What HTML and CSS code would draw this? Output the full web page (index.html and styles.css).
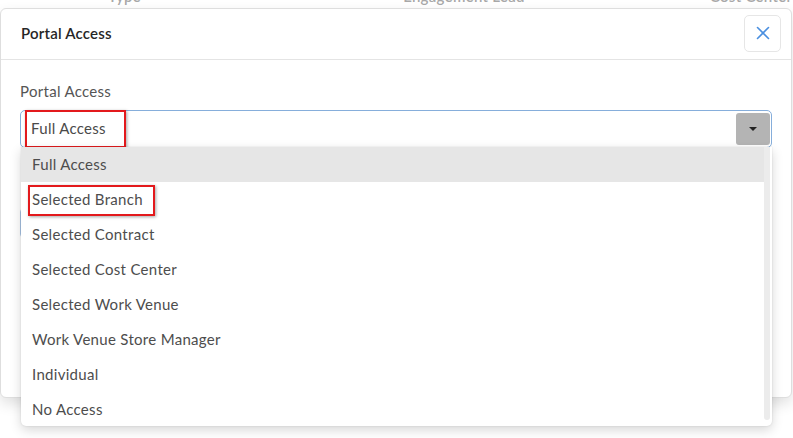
FILE: index.html
```html
<!DOCTYPE html>
<html>
<head>
<meta charset="utf-8">
<link rel="stylesheet" href="styles.css">
</head>
<body>
<div class="page">
  <div class="table-head">
    <span class="th th-type">Type</span>
    <span class="th th-lead">Engagement Lead</span>
    <span class="th th-cost">Cost Center</span>
  </div>
</div>

<div class="modal">
  <div class="modal-header">
    <span class="modal-title">Portal Access</span>
    <button class="close-btn" aria-label="Close">
      <svg width="14" height="14" viewBox="0 0 14 14"><path d="M1.5 1.5 L12.5 12.5 M12.5 1.5 L1.5 12.5" stroke="#4a8fe0" stroke-width="1.6" stroke-linecap="round" fill="none"/></svg>
    </button>
  </div>
  <div class="modal-body">
    <div class="field-label">Portal Access</div>
    <div class="select">
      <span class="select-value">Full Access</span>
      <span class="select-arrow"><span class="tri"></span></span>
      <span class="mark mark-value"></span>
    </div>
    <div class="behind-btn"></div>

    <div class="dropdown">
      <ul class="options">
        <li class="opt active">Full Access</li>
        <li class="opt">Selected Branch<span class="mark mark-opt"></span></li>
        <li class="opt">Selected Contract</li>
        <li class="opt">Selected Cost Center</li>
        <li class="opt">Selected Work Venue</li>
        <li class="opt">Work Venue Store Manager</li>
        <li class="opt">Individual</li>
        <li class="opt">No Access</li>
      </ul>
      <div class="scrollbar"></div>
    </div>
  </div>
</div>
</body>
</html>
```

FILE: styles.css
```css
* { box-sizing: border-box; }
html, body {
  margin: 0;
  padding: 0;
  background: #ffffff;
  font-family: Lato, "Open Sans", sans-serif;
  overflow: hidden;
}
body { width: 793px; height: 438px; position: relative; }

.page { height: 438px; }
.table-head {
  display: flex;
  margin-top: -13px;
  height: 20px;
  font-size: 15px;
  color: #a8a8a8;
  font-weight: 600;
  letter-spacing: 0.3px;
}
.th-type { margin-left: 108px; }
.th-lead { margin-left: 262px; }
.th-cost { margin-left: 185px; }

.modal {
  position: absolute;
  left: 0;
  top: 8px;
  width: 792px;
  height: 390px;
  background: #fff;
  border: 1px solid #dedede;
  border-radius: 6px;
  box-shadow: 0 6px 14px rgba(0,0,0,0.12);
}
.modal-header {
  height: 51px;
  display: flex;
  align-items: center;
  justify-content: space-between;
  padding: 0 10px 0 20px;
  border-bottom: 1px solid #e4e4e4;
}
.modal-title {
  font-size: 15px;
  font-weight: 600;
  color: #262626;
  margin-top: -3px;
  letter-spacing: 0.2px;
}
.close-btn {
  width: 37px;
  height: 37px;
  border: 1px solid #e6e6e6;
  border-radius: 5px;
  background: #fff;
  display: flex;
  align-items: center;
  justify-content: center;
  padding: 0;
  margin-top: -2px;
}

.modal-body {
  position: relative;
  padding: 21px 20px 0 19px;
}
.field-label {
  font-size: 15px;
  color: #555;
  line-height: 20px;
  letter-spacing: 0.3px;
}
.select {
  position: relative;
  margin-top: 9px;
  height: 38px;
  width: 752px;
  border: 1px solid #86aedb;
  border-radius: 5px;
  display: flex;
  align-items: center;
  justify-content: space-between;
  padding: 0 1px 0 10px;
}
.select-value {
  font-size: 15px;
  color: #4a4a4a;
  letter-spacing: 0.3px;
  margin-top: -3px;
}
.select-arrow {
  width: 34px;
  height: 32px;
  background: #b4b4b4;
  border-radius: 3px;
  display: flex;
  align-items: center;
  justify-content: center;
}
.tri {
  width: 0;
  height: 0;
  border-left: 4px solid transparent;
  border-right: 4px solid transparent;
  border-top: 4px solid #222;
}

.mark {
  position: absolute;
  border: 2px solid #e3191c;
  box-shadow: 1px 1px 3px rgba(0,0,0,0.35);
  pointer-events: none;
}
.mark-value {
  left: 4px;
  top: -1px;
  width: 101px;
  height: 38px;
}

.behind-btn {
  margin-top: 60px;
  width: 120px;
  height: 30px;
  border: 1px solid #a9c5e6;
  border-radius: 4px;
  background: #fff;
}

.dropdown {
  position: absolute;
  left: 20px;
  top: 87px;
  width: 751px;
  height: 279px;
  background: #fff;
  border-radius: 0 0 5px 5px;
  box-shadow: 0 4px 12px rgba(0,0,0,0.16), 0 0 2px rgba(0,0,0,0.12);
  overflow: hidden;
}
.options {
  list-style: none;
  margin: 0;
  padding: 0;
  width: 742px;
}
.opt {
  position: relative;
  height: 35px;
  line-height: 35px;
  padding-left: 11px;
  font-size: 15px;
  color: #4d4d4d;
  letter-spacing: 0.3px;
}
.opt.active { background: #e6e6e6; width: 748px; }
.mark-opt {
  left: 7px;
  top: 3px;
  width: 127px;
  height: 31px;
}
.scrollbar {
  position: absolute;
  right: 2px;
  top: 0;
  width: 6px;
  height: 273px;
  background: #ececec;
  border-radius: 0 0 3px 3px;
}
```
